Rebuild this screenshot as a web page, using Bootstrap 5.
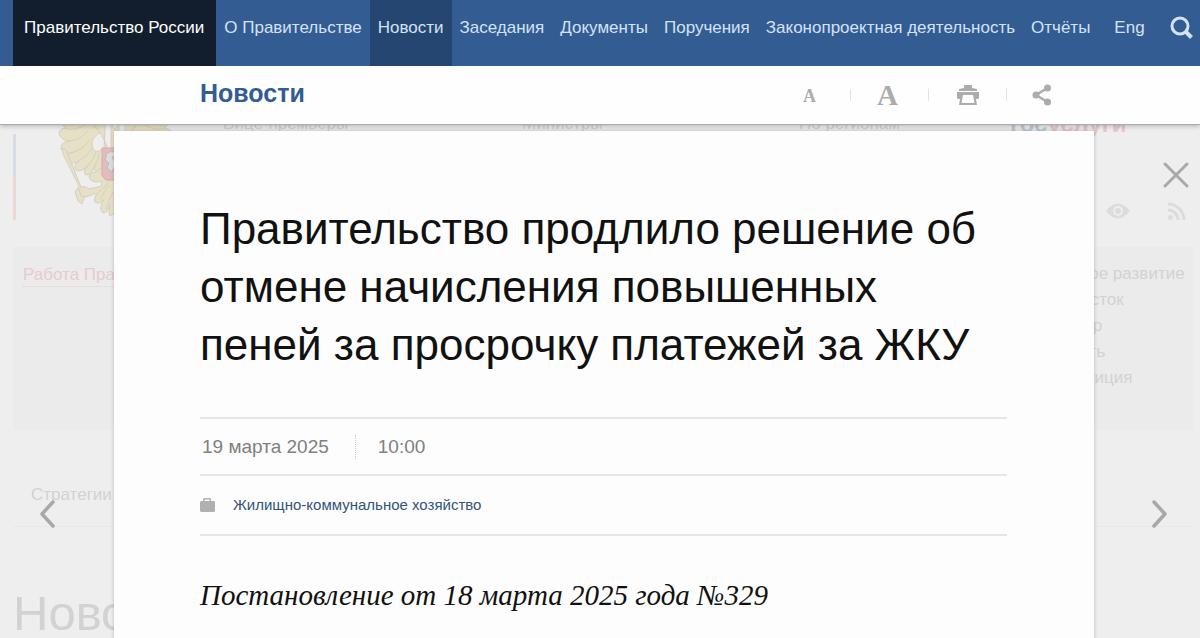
<!DOCTYPE html>
<html lang="ru">
<head>
<meta charset="utf-8">
<meta name="viewport" content="width=device-width, initial-scale=1">
<title>Новости — Правительство России</title>
<link href="https://cdn.jsdelivr.net/npm/bootstrap@5.3.0/dist/css/bootstrap.min.css" rel="stylesheet">
<style>
  body { font-family: "Liberation Sans", Arial, sans-serif; font-size: 17px; line-height: 24px; background: #eee; }
  a { text-decoration: none; }
  .gov-page { height: 100vh; }

  /* top navigation */
  .gov-nav { background: #335c92; height: 66px; padding: 0 0 0 13px; z-index: 4; }
  .gov-nav .nav-link { color: #d3e2f7; padding: 16px 8px 26px; line-height: 24px; white-space: nowrap; }
  .gov-nav .nav-link.active { background: #264672; color: #d3e2f7; }
  .gov-nav .nav-link.gov-home { background: #121e2d; color: #fff; padding-left: 11px; padding-right: 12px; }
  .gov-search { color: #d3e2f7; width: 24px; margin-right: 6px; }

  /* section bar */
  .section-bar { background: #fefefe; border-bottom: 1px solid #acacac; box-shadow: 0 1px 5px rgba(0,0,0,.25); height: 59px; padding: 0 115px 0 200px; z-index: 3; }
  .section-bar h2 { font-size: 25px; line-height: 28px; font-weight: 700; color: #335c92; }
  .tool { width: 78px; height: 12px; color: #acacac; border-right: 1px solid #e2e2e2; }
  .tool:last-child { border-right: 0; }
  .tool-letter { font-family: "Liberation Serif", serif; font-weight: 700; padding-right: 4px; }
  .letter-sm { font-size: 18px; line-height: 18px; padding-top: 2px; }
  .letter-lg { font-size: 29px; line-height: 28px; }

  /* dimmed page below the article */
  .dimmed { inset: 0; padding: 112px 7px 0 13px; color: #d2d2d2; }
  .dimmed a { color: inherit; }
  .masthead { height: 135px; }
  .flag-line { width: 3px; height: 86px; margin-top: 22px; background: linear-gradient(#d7dce5 50%, #ecd6d6 50%); }
  .emblem { width: 116px; height: 106px; margin-left: 41px; }
  .link-grid { display: grid; grid-template-columns: 299px 277px 211px auto; margin-left: 50px; }
  .dimmed .services { font-size: 24px; font-weight: 700; color: #e6c8ca; }
  .services span { color: #bfcbd6; }
  .side-icons { padding: 90px 6px 0 0; gap: 38px; }
  .topics { background: #ebebeb; height: 183px; padding: 14px 10px 0; }
  .topics .work { color: #e6cccc; border-bottom: 1px dotted #e6cccc; margin-top: 2px; height: 24px; }
  .topics ul { line-height: 26px; width: 186px; margin-bottom: 0; }
  .strategies { height: 97px; padding: 53px 18px 0; border-bottom: 1px solid #e8e8e8; }
  .dimmed .page-title { font-size: 49px; line-height: 56px; margin: 58px 0 0; font-weight: 400; }

  /* article */
  .article-sheet { background: #fdfdfd; margin: 6px 106px 0 114px; padding: 69px 87px 0 86px; min-height: 100vh; box-shadow: 0 0 4px rgba(0,0,0,.22); z-index: 2; }
  .article-sheet h1 { font-size: 44px; line-height: 58px; color: #111; margin: 0 0 43px; font-weight: 400; }
  .meta-row { border-top: 2px solid #e6e6e6; height: 57px; }
  .meta-row.topic { border-bottom: 2px solid #e6e6e6; height: 62px; }
  .date-line { font-size: 19px; color: #808080; padding-left: 2px; }
  .date-line time + time { border-left: 1px dotted #ccc; margin-left: 26px; padding-left: 22px; }
  .topic a { font-size: 15px; color: #335478; margin-left: 18px; }
  .lead-line { font-family: Georgia, "Liberation Serif", serif; font-style: italic; font-size: 29px; line-height: 32px; color: #111; margin: 43px 0 0; white-space: nowrap; }

  /* controls lying over the dimmed page */
  .over { z-index: 3; color: #a8a8a8; line-height: 0; }
  .over-close { right: 10px; top: 36px; }
  .over-prev { left: 38px; top: 374px; }
  .over-next { right: 31px; top: 374px; }
</style>
</head>
<body>
<div class="gov-page position-relative overflow-hidden">
  <nav class="gov-nav navbar-nav flex-row position-relative">
    <a class="nav-link gov-home" href="#">Правительство России</a>
    <a class="nav-link" href="#">О Правительстве</a>
    <a class="nav-link active" href="#">Новости</a>
    <a class="nav-link" href="#">Заседания</a>
    <a class="nav-link" href="#">Документы</a>
    <a class="nav-link" href="#">Поручения</a>
    <a class="nav-link" href="#">Законопроектная деятельность</a>
    <a class="nav-link" href="#">Отчёты</a>
    <a class="nav-link ms-2" href="#">Eng</a>
    <button type="button" class="gov-search btn border-0 p-0 pt-3 ms-auto align-self-start" aria-label="Поиск">
      <svg class="d-block" width="24" height="24" viewBox="0 0 24 24" fill="none" stroke="currentColor"><circle cx="10" cy="10" r="8" stroke-width="3"/><path d="M15.500 15.500L21.500 21.500" stroke-width="4"/></svg>
    </button>
  </nav>

  <header class="section-bar d-flex align-items-center justify-content-between position-relative">
    <h2 class="m-0 pb-1">Новости</h2>
    <div class="d-flex">
      <button type="button" class="tool btn rounded-0 border-top-0 border-bottom-0 border-start-0 p-0 d-flex align-items-center justify-content-center" aria-label="Мелкий шрифт"><span class="tool-letter letter-sm">A</span></button>
      <button type="button" class="tool btn rounded-0 border-top-0 border-bottom-0 border-start-0 p-0 d-flex align-items-center justify-content-center" aria-label="Крупный шрифт"><span class="tool-letter letter-lg">A</span></button>
      <button type="button" class="tool btn rounded-0 border-top-0 border-bottom-0 border-start-0 p-0 d-flex align-items-center justify-content-center" aria-label="Печать">
        <svg class="flex-shrink-0" width="24" height="20" viewBox="0 0 24 20" fill="currentColor"><path d="M8 0h8v3l5 1v2H3V4l5-1z"/><path fill-rule="evenodd" d="M1 7h22v6l-1 1h-2l1 6H3l1-6H2l-1-1zM7 10L5.500 18h13L17 10z"/></svg>
      </button>
      <button type="button" class="tool btn rounded-0 border-0 p-0 d-flex align-items-center justify-content-center" aria-label="Поделиться">
        <svg class="flex-shrink-0 me-2" width="20" height="22" viewBox="0 0 20 22" fill="currentColor"><path d="M15.500 4L4 11l11.500 7" fill="none" stroke="currentColor" stroke-width="2.500"/><circle cx="4" cy="11" r="3.500"/><circle cx="15.500" cy="4" r="3.500"/><circle cx="15.500" cy="18" r="3.500"/></svg>
      </button>
    </div>
  </header>

  <div class="dimmed position-absolute">
    <div class="masthead d-flex">
      <div class="flag-line"></div>
      <svg class="emblem flex-shrink-0" viewBox="0 0 116 106">
        <defs>
          <g id="half" fill="#e6e1c6" stroke="#d3d0c3" stroke-width="1">
            <path d="M3 0Q2 9 8 16Q0 17 3 24Q6 29 13 29Q3 30 4 37Q9 43 17 40Q7 43 10 49Q15 54 23 48Q15 54 19 58Q25 61 31 53Q25 60 29 63Q35 63 38 53Q36 60 42 60Q46 53 45 47L46 37Q37 43 35 34Q34 25 44 20Q35 15 33 5L30 0z"/>
            <path d="M8 16Q18 20 29 12M13 29Q23 28 31 19M17 40Q27 37 33 27M23 48Q31 44 35 36M31 53Q37 48 39 40M7 5Q17 11 27 6M38 53Q42 48 42 41" fill="none"/>
            <path d="M37 12Q42 5 54 10Q46 12 48 19L47 37L54 41V10L58 18V70H50V34Q46 24 37 12z"/>
            <path d="M5 36l4 2 15 37 5 5-4 12-4-3-3-9 4-6L6 42z"/>
            <path d="M22 77q5-5 10 0l13-3-1-5q-10 3-12-4 1-5 7-5 4-5 9-2l8 9v14L37 82q-8 4-13 2z"/>
            <path d="M58 60L48 75Q35 84 38 90q5 3 9-3-6 10-1 14 5 0 7-9-2 9 0 12l5-3z"/>
            <path d="M43 87q4-6 9-14M49 97q3-9 7-17" fill="none"/>
          </g>
        </defs>
        <use href="#half"/><use href="#half" transform="translate(116 0) scale(-1 1)"/>
        <path d="M45 36h26v32H49l-4-4z" fill="#e2bdbb" stroke="#d9aaaa"/>
        <path d="M50 41q8-4 10 3l-5 1 4 6-4 9-5-4 2-5-4-3z" fill="#ddd" stroke="#bbb"/>
      </svg>
      <div class="link-grid flex-shrink-0">
        <a href="#">Вице-премьеры</a><a href="#">Министры</a><a href="#">По регионам</a>
        <a class="services" href="#"><span>гос</span>услуги</a>
      </div>
      <div class="side-icons position-absolute end-0 d-flex align-items-center">
        <svg width="24" height="16" viewBox="0 0 24 16"><path d="M0 8Q12-7 24 8Q12 23 0 8z" fill="#dcdcdc"/><circle cx="12" cy="8" r="5" fill="#eee"/><circle cx="12" cy="8" r="3" fill="#dcdcdc"/></svg>
        <svg class="me-2" width="18" height="18" viewBox="0 0 18 18" fill="none" stroke="#dcdcdc" stroke-width="3"><path d="M0 2A16 16 0 0 1 16 18M0 8A10 10 0 0 1 10 18"/><circle cx="2.500" cy="15.500" r="2.500" fill="#dcdcdc" stroke="none"/></svg>
      </div>
    </div>
    <div class="topics d-flex justify-content-between align-items-start">
      <a class="work" href="#">Работа Правительства</a>
      <ul class="list-unstyled text-nowrap">
        <li><a href="#">Региональное развитие</a></li>
        <li><a href="#">Дальний Восток</a></li>
        <li><a href="#">Россия и мир</a></li>
        <li><a href="#">Безопасность</a></li>
        <li><a href="#">Право и юстиция</a></li>
      </ul>
    </div>
    <div class="strategies"><a href="#">Стратегии</a></div>
    <h2 class="page-title">Новости</h2>
  </div>

  <main class="position-relative d-flex flex-column">
    <article class="article-sheet position-relative">
      <h1>Правительство продлило решение об отмене начисления повышенных пеней за просрочку платежей за ЖКУ</h1>
      <div class="meta-row date-line d-flex align-items-center"><time datetime="2025-03-19">19 марта 2025</time><time datetime="10:00">10:00</time></div>
      <div class="meta-row topic d-flex align-items-center">
        <svg width="15" height="14" viewBox="0 0 15 14" fill="#b0b0b0"><path fill-rule="evenodd" d="M3 3V1l1-1h6l1 1v2h3l1 1v9l-1 1H1l-1-1V4l1-1zM4.500 3h5V1.500h-5z"/></svg>
        <a href="#">Жилищно-коммунальное хозяйство</a>
      </div>
      <p class="lead-line">Постановление от 18 марта 2025 года №329</p>
    </article>
    <button type="button" class="over over-close btn border-0 p-0 position-absolute" aria-label="Закрыть"><svg width="28" height="28" viewBox="0 0 28 28" fill="none" stroke="currentColor" stroke-width="3" stroke-linecap="round"><path d="M3 3l22 22M25 3L3 25"/></svg></button>
    <button type="button" class="over over-prev btn border-0 p-0 position-absolute" aria-label="Назад"><svg width="18" height="30" viewBox="0 0 18 30" fill="none" stroke="currentColor" stroke-width="3.500" stroke-linecap="round" stroke-linejoin="round"><path d="M15 3L4 15l11 12"/></svg></button>
    <button type="button" class="over over-next btn border-0 p-0 position-absolute" aria-label="Вперёд"><svg width="18" height="30" viewBox="0 0 18 30" fill="none" stroke="currentColor" stroke-width="3.500" stroke-linecap="round" stroke-linejoin="round"><path d="M3 3l11 12L3 27"/></svg></button>
  </main>
</div>
<script src="https://cdn.jsdelivr.net/npm/bootstrap@5.3.0/dist/js/bootstrap.bundle.min.js"></script>
</body>
</html>
